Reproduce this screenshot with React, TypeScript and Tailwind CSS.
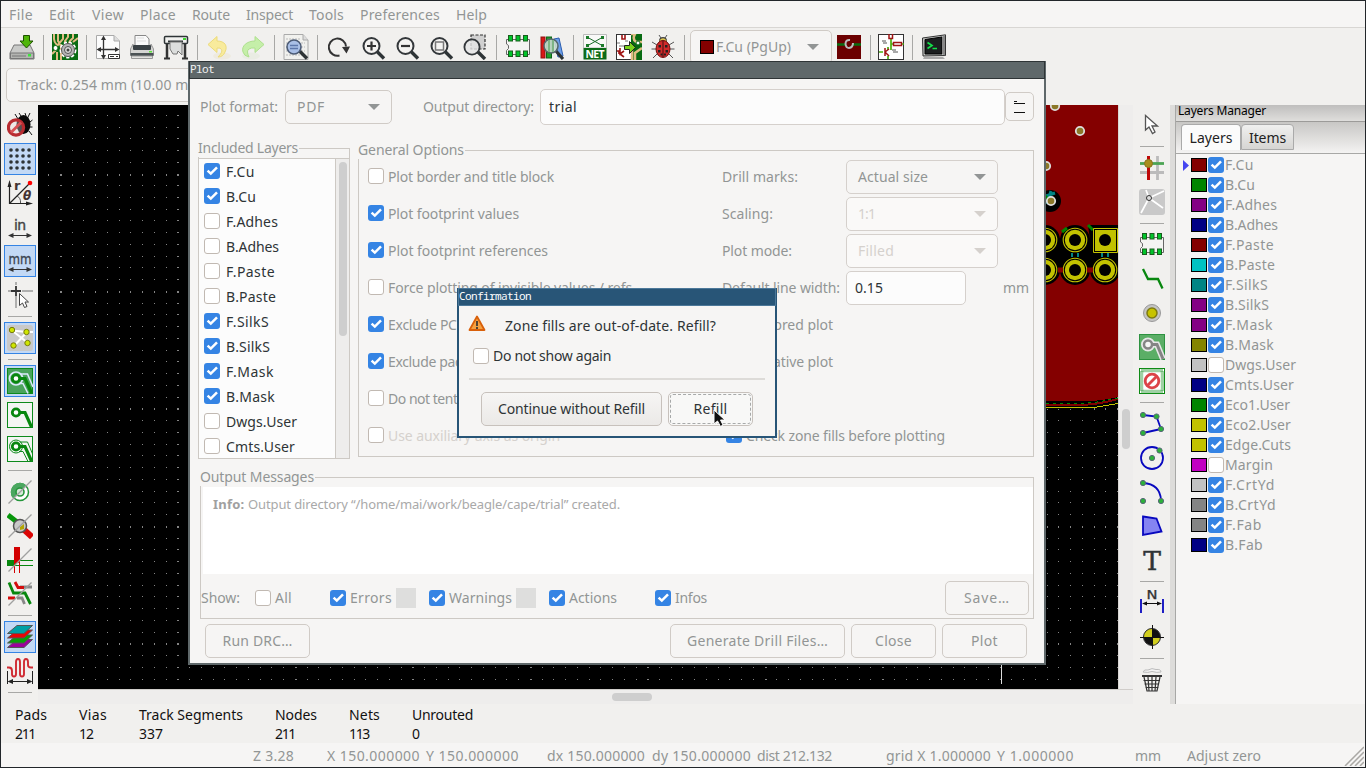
import React, { useLayoutEffect, useRef } from "react";

/* Text label tracked so that it fills exactly `w` pixels. */
function T({ w, children, className = "" }: { w?: number; children: string; className?: string }) {
  const ref = useRef<HTMLSpanElement>(null);
  useLayoutEffect(() => {
    const el = ref.current;
    if (!el || !w) return;
    el.style.letterSpacing = "0px";
    const natural = el.getBoundingClientRect().width;
    el.style.letterSpacing = (w - natural) / children.length + "px";
  }, [w, children]);
  return (
    <span ref={ref} className={"inline-block shrink-0 whitespace-pre " + className}>
      {children}
    </span>
  );
}

function Check({ on }: { on?: boolean }) {
  return on ? (
    <svg className="size-4 shrink-0" viewBox="0 0 16 16">
      <rect width="16" height="16" rx="3" fill="#3584e4" />
      <path d="M3.6 7.6L6.8 10.6L13 4.4" fill="none" stroke="#fff" strokeWidth="2.5" />
    </svg>
  ) : (
    <span className="size-4 shrink-0 rounded-[3px] border border-[#c1b9b2] bg-white" />
  );
}

function Svg({ children, className = "" }: { children: React.ReactNode; className?: string }) {
  return (
    <svg className={"size-[26px] shrink-0 " + className} viewBox="0 0 26 26" fill="none">
      {children}
    </svg>
  );
}

const Handle = () => <path d="M16.5 17L24 24.5" stroke="#2e3436" strokeWidth="3.4" strokeLinecap="butt" />;
const Lens = ({ children }: { children?: React.ReactNode }) => (
  <Svg>
    <Handle />
    <circle cx="11.5" cy="12" r="8" fill="#f6f5f4" fillOpacity=".6" stroke="#33373a" strokeWidth="2" />
    {children}
  </Svg>
);

const Chip = () => (
  <Svg>
    <path d="M1.500 5.500H24.500V20.500H1.500V16.500L3.500 14.500V11.500L1.500 10Z" fill="#f4f4f2" stroke="#666" />
    {[3.5, 11, 18.5].map((x) => (
      <g key={x} fill="#00c52a" stroke="#185c1c">
        <rect x={x} y="1.500" width="4" height="5.500" />
        <rect x={x} y="17" width="4" height="5.500" />
      </g>
    ))}
  </Svg>
);

const top: Record<string, React.ReactNode> = {
  save: (
    <Svg>
      <path d="M5 11H21L25 19V25H1V19Z" fill="#c9cac8" stroke="#777" />
      <path d="M1.5 19H24.5V24.5H1.5Z" fill="#b3b4b1" stroke="#777" />
      <path d="M3 22H17" stroke="#777" />
      <rect x="19" y="20" width="3" height="2.5" fill="#3de63d" />
      <path d="M14.5 1.5H20.5V7H24L17.5 14L11 7H14.5Z" fill="#4fb508" stroke="#1f5200" />
    </Svg>
  ),
  board: (
    <Svg>
      <rect width="26" height="26" fill="#086b12" />
      <path d="M2 0V5Q2 8 5 11V13M6 0V7Q9 10 9 13V26M11 0V5L5 12M16 0V3L13 7V10M21 0V4Q17 7 17 10M26 4L21 8M0 20L4 16M5 18V26" stroke="#e0bd84" strokeWidth="2" />
      <circle cx="3.5" cy="14" r="2.5" fill="#fff" stroke="#086b12" />
      <circle cx="16" cy="16" r="7" fill="#c0c0c0" stroke="#fff" strokeWidth="3" strokeDasharray="3 1.8" />
      <circle cx="16" cy="16" r="6.5" fill="#b5b5b5" stroke="#555" />
      <circle cx="16" cy="16" r="3.5" fill="#ddd" stroke="#555" />
      <circle cx="16" cy="16" r="1.5" fill="#444" />
    </Svg>
  ),
  page: (
    <Svg>
      <path d="M1.5 1.5H19L24.5 7V24.5H1.5Z" fill="#fcfcfc" stroke="#aaa" />
      <path d="M19 1.5V7H24.5" fill="#ddd" stroke="#aaa" />
      <path d="M8.5 4V23M3 15.5H22" stroke="#333" strokeWidth="1.3" />
      <path d="M8.5 1.5L11 6H6ZM8.5 25.5L11 21H6ZM1.5 15.5L6 13V18ZM24.5 15.5L20 13V18Z" fill="#333" />
      <path d="M13.500 20.500H24.500V24.500H13.500Z" fill="#fff" stroke="#333" />
      <path d="M15 22.500H19M21 22.500H23" stroke="#333" />
    </Svg>
  ),
  print: (
    <Svg>
      <path d="M6 1.500H17L20 5V14H6Z" fill="#fafafa" stroke="#888" />
      <path d="M8 4H15M8 7H17" stroke="#ddd" />
      <path d="M4 10L1.500 15V21H24.500V15L22 10V13H4Z" fill="#d5d5d3" stroke="#999" />
      <rect x="4" y="11" width="18" height="5" rx="1" fill="#3a4145" />
      <path d="M1.500 19H24.500V22H1.500Z" fill="#4b5255" />
      <path d="M2.500 22H23.500V24.500H2.500Z" fill="#e2e2e0" stroke="#999" />
      <rect x="20" y="17" width="3" height="1.500" fill="#5be33b" />
    </Svg>
  ),
  plot: (
    <Svg>
      <path d="M4 8V24M22 8V24" stroke="#333" strokeWidth="2.500" />
      <path d="M1 24.500H7M19 24.500H25" stroke="#333" strokeWidth="2" />
      <rect x="1.500" y="2.500" width="23" height="7" rx="1" fill="#f1f1ef" stroke="#2e3436" strokeWidth="1.500" />
      <path d="M5 7.500H20" stroke="#2e3436" strokeWidth="2" />
      <path d="M7 8H19V21L15 17L14 20H10L7 15Z" fill="#dcdedd" stroke="#777" />
      <rect x="20" y="4" width="3" height="2" fill="#3fd72f" />
    </Svg>
  ),
  undo: (
    <Svg>
      <ellipse cx="16" cy="22" rx="9" ry="3.500" fill="#eeeadf" />
      <path d="M2 10.500L11 2.500V7C19 7 22 12 19 18Q17 23 12 23Q17 18 15.500 15.500Q14.500 13.500 11 14V18.500Z" fill="#f8eb9c" stroke="#eddb7a" />
    </Svg>
  ),
  redo: (
    <Svg>
      <ellipse cx="11" cy="22" rx="9" ry="3.500" fill="#e9ece3" />
      <path d="M24 10.500L15 2.500V7C7 7 1 12 3 18Q4 22 9 23Q6 17 9 15Q11 13.500 15 14V18.500Z" fill="#c5efa9" stroke="#aee08e" />
    </Svg>
  ),
  find: (
    <Svg>
      <path d="M1 .5H20L25 6V25.500H1Z" fill="#f1f1ee" stroke="#aaa" />
      <path d="M20 .5V6H25" fill="#ddd" stroke="#aaa" />
      <path d="M3 5H18M3 9H22M3 13H22M3 17H22M3 21H20" stroke="#bbb" strokeDasharray="2 1" />
      <Handle />
      <circle cx="11" cy="13" r="7" fill="#a9bfe6" stroke="#4c5b75" strokeWidth="1.600" />
      <path d="M7 11.500H15M7 14.500H15" stroke="#5d77ab" strokeWidth="1.500" />
    </Svg>
  ),
  refresh: (
    <Svg>
      <path d="M13.500 21.500A8.600 8.600 0 1 1 20 12.500" stroke="#333" strokeWidth="2" />
      <path d="M16 13L24 12.500L20.500 19.500Z" fill="#333" />
    </Svg>
  ),
  zin: <Lens><path d="M7 12H16M11.500 7.500V16.500" stroke="#333" strokeWidth="2.200" /></Lens>,
  zout: <Lens><path d="M7 12H16" stroke="#333" strokeWidth="2.200" /></Lens>,
  zfit: <Lens><rect x="7.500" y="8" width="8" height="8" stroke="#777" strokeWidth="1.500" /></Lens>,
  zsel: (
    <Svg>
      <rect x="9" y="1" width="14" height="14" fill="#d0d0d0" stroke="#333" strokeWidth="1.200" strokeDasharray="3 1.500" />
      <path d="M16 18L23 25" stroke="#2e3436" strokeWidth="3.400" />
      <circle cx="10" cy="13" r="7.600" fill="#e5e5e5" fillOpacity=".8" stroke="#33373a" strokeWidth="1.800" />
    </Svg>
  ),
  chip: <Chip />,
  lib: (
    <Svg>
      <rect x="2" y="3" width="4" height="21" fill="#d71717" stroke="#901010" />
      <rect x="7.500" y="3" width="5" height="21" fill="#1f9d2c" stroke="#0d6218" />
      <path d="M15 5L20 4L24 22L19 23Z" fill="#6d9fea" stroke="#2a5db0" />
      <path d="M17 17L24 25" stroke="#2e3436" strokeWidth="3.200" />
      <circle cx="12" cy="12" r="7" fill="#c9dccf" fillOpacity=".9" stroke="#54676a" strokeWidth="1.500" />
      <path d="M10 6V18M14 6V18" stroke="#7db485" strokeWidth="2" />
    </Svg>
  ),
  net: (
    <Svg>
      <path d="M1.500 .5H24.500V14H1.500Z" fill="#f9f9f8" stroke="#bbb" />
      <path d="M5 3L21 12M21 3L5 12" stroke="#1b6c2a" />
      <path d="M4 2H7V5H4ZM19 2H22V5H19ZM4 10H7V13H4ZM19 10H22V13H19Z" fill="#1b7a2a" />
      <rect x="1.500" y="14" width="23" height="11.500" fill="#0c6b18" />
      <text x="13" y="24" textAnchor="middle" textLength="19" fontFamily="Noto Sans, sans-serif" fontWeight="700" fontSize="10.500" fill="#fff">NET</text>
    </Svg>
  ),
  update: (
    <Svg>
      <rect x=".5" y=".5" width="25" height="25" fill="#fff" stroke="#333" />
      <rect x="15" y="0" width="11" height="26" fill="#086b12" />
      <path d="M15 0H19Q16 5 20 8H26M15 15H16V26M26 14L19 19V26" stroke="#e0bd84" strokeWidth="2.500" />
      <path d="M6 1V5H9V1M3 17V20M1 17H4M4 14V20L8 17M4 20L8 23" stroke="#a01414" strokeWidth="1.600" />
      <path d="M1 9H4M3 12H8M9 7H12" stroke="#777" />
      <circle cx="22" cy="9" r="2" fill="#fff" stroke="#086b12" />
      <path d="M8.500 11.500H13.500V7.500L19.500 13.500L13.500 19.500V15.500H8.500Z" fill="#7bd31c" stroke="#222" />
    </Svg>
  ),
  bug: (
    <Svg>
      <path d="M7 11L2 8M7 15H1.500M8 19L3 24M19 11L24 8M19 15H24.500M18 19L23 24M11 4L9 1M15 4L17 1" stroke="#555" />
      <circle cx="13" cy="7" r="4" fill="#444" />
      <path d="M10 7Q13 3 16 7" stroke="#e0c84b" strokeWidth="1.500" />
      <ellipse cx="13" cy="15" rx="7" ry="8.500" fill="#d22a2a" stroke="#701010" />
      <path d="M13 7V23" stroke="#401010" />
      <path d="M8.500 11h2.500v2.500h-2.500zM15 11h2.500v2.500H15zM8 16h2.500v2.500H8zM15.500 16h2.500v2.500h-2.500zM10.500 19.500h2v2h-2zM14 19.500h2v2h-2z" fill="#222" />
    </Svg>
  ),
  layerPair: (
    <Svg>
      <rect x="1" y="1" width="24" height="24" fill="#6b0000" />
      <path d="M1 10.500H9M17 10.500H25" stroke="#0a6e12" strokeWidth="2.500" />
      <path d="M14 6Q9.500 5.500 9.500 10Q10 14 13 14Q17 13.500 17 9" stroke="#bbb" strokeWidth="2" />
    </Svg>
  ),
  sch: (
    <Svg>
      <rect x=".5" y=".5" width="25" height="25" fill="#fff" stroke="#333" />
      <path d="M13 4V10H16M13 10V16M1 18H5M10 22V25M10 13V16M24 10H26" stroke="#4bb010" strokeWidth="1.700" />
      <path d="M11 0V4.500H14.500V0M15.500 8.500H23.500V11.500H15.500ZM7 14V22M7 18L11 15M7 18L11 22" stroke="#a01414" strokeWidth="1.500" />
      <path d="M4 7H8M5 9H9M14 16H18M15 18H20" stroke="#555" />
    </Svg>
  ),
  term: (
    <Svg>
      <path d="M3 23H22L24 25H2Z" fill="#aaa" />
      <path d="M1.500 4L24.500 .8V21.500L2 22Z" fill="#c5c8c6" stroke="#333" />
      <path d="M4 5.500L21 3V20L4 20Z" fill="#1c1f20" stroke="#000" />
      <path d="M21 3L24 1V21.500L21 20" fill="#888" />
      <path d="M6.500 8.500L11 11.500L6.500 14.500M11.500 14.500H16" stroke="#14e04a" strokeWidth="1.700" />
    </Svg>
  ),
};

const HArrow = ({ color = "#333" }) => (
  <>
    <path d="M3 21.500H23" stroke={color} />
    <path d="M1 21.500L6.500 19V24ZM25 21.500L19.500 19V24Z" fill={color} />
  </>
);

function Trace({ mode }: { mode: number }) {
  return (
    <Svg>
      <rect x=".5" y=".5" width="25" height="25" fill={mode === 0 ? "#4aa35c" : "#f4f5f3"} stroke="#0d8a1c" />
      {mode !== 1 && (
        <>
          <circle cx="9" cy="10.500" r="6.500" stroke={mode === 0 ? "#dbe9fb" : "#0d8a1c"} strokeWidth={mode === 0 ? 1.700 : 1} />
          <path d="M13 6H20.500L26 19M12 15.500H16L21 25.500" stroke={mode === 0 ? "#dbe9fb" : "#0d8a1c"} strokeWidth={mode === 0 ? 1.500 : 1} />
        </>
      )}
      <path d="M12 10.500H18L24.500 25" stroke="#08870f" strokeWidth="3.200" />
      <circle cx="9" cy="10.500" r="3.700" fill="#fff" stroke="#08870f" strokeWidth="2.800" />
    </Svg>
  );
}

const Slash = () => <path d="M1.500 24.500L24.500 1.500" stroke="#a0a0a0" strokeWidth="1.300" />;

const left: (null | { on?: boolean; icon: React.ReactNode })[] = [
  {
    icon: (
      <Svg>
        <path d="M11 7L8 2M20 7L23 1M23 10L25.500 8M23 15H25.500M22 19L25 23M14 4L12 1M19 4L18 1" stroke="#111" />
        <ellipse cx="16.500" cy="12.500" rx="7" ry="9.500" fill="#080808" />
        <circle cx="9" cy="15.500" r="7.600" fill="#e8dada" fillOpacity=".35" stroke="#b82c31" strokeWidth="3.200" />
        <path d="M4 20.500L14 10.500" stroke="#d85155" strokeWidth="2.800" />
      </Svg>
    ),
  },
  {
    on: true,
    icon: (
      <Svg>
        {[4, 10, 16, 22].map((x) => [4, 10, 16, 22].map((y) => <circle key={x + "-" + y} cx={x} cy={y} r="1.800" fill="#2e3436" />))}
      </Svg>
    ),
  },
  {
    icon: (
      <Svg>
        <path d="M2.500 6V23.500H22M3 23L22 4" stroke="#222" strokeWidth="1.200" />
        <path d="M2.500 0L4.500 7H.5ZM26 23.500L19 21.500V25.500Z" fill="#222" />
        <path d="M10 16Q14 18 13.500 23" stroke="#555" />
        <circle cx="23" cy="3" r="2.300" fill="red" />
        <text x="7" y="10" fontFamily="DejaVu Sans, sans-serif" fontWeight="700" fontSize="13" fill="#433">r</text>
        <text x="16" y="19.500" fontFamily="DejaVu Sans, sans-serif" fontWeight="700" fontStyle="italic" fontSize="12" fill="#433">θ</text>
      </Svg>
    ),
  },
  {
    icon: (
      <Svg>
        <text x="13" y="16" textAnchor="middle" textLength="12" fontFamily="DejaVu Sans, sans-serif" fontSize="14" fill="#444" stroke="#444" strokeWidth=".4">in</text>
        <HArrow />
      </Svg>
    ),
  },
  {
    on: true,
    icon: (
      <Svg>
        <text x="13" y="16" textAnchor="middle" textLength="23" lengthAdjust="spacingAndGlyphs" fontFamily="DejaVu Sans, sans-serif" fontSize="14" fill="#3a4450" stroke="#3a4450" strokeWidth=".3">mm</text>
        <HArrow />
      </Svg>
    ),
  },
  {
    icon: (
      <Svg>
        <path d="M9 0V3M9 14V26M1 9H4M15 9H26" stroke="#999" strokeWidth="1.500" />
        <path d="M9 4V14M4 9H14" stroke="#333" strokeWidth="1.800" />
        <path d="M12.500 11.500V23.500L15.500 21L17.500 25.500L20 24.500L18 20H21.500Z" fill="#fff" stroke="#444" />
      </Svg>
    ),
  },
  null,
  {
    on: true,
    icon: (
      <Svg>
        <rect width="26" height="26" rx="3" fill="#c9c9c9" />
        <path d="M5 5.500L21 18M20 7L7 21M5 5.500L20 7H26" stroke="#fff" strokeWidth="2" />
        {[[5, 5], [19.500, 7], [6.500, 20.500], [20.500, 18]].map(([x, y]) => <circle key={x} cx={x} cy={y} r="2.700" fill="#cfe600" stroke="#777a10" />)}
      </Svg>
    ),
  },
  null,
  { on: true, icon: <Trace mode={0} /> },
  { icon: <Trace mode={1} /> },
  { icon: <Trace mode={2} /> },
  null,
  {
    icon: (
      <Svg>
        <circle cx="13" cy="13" r="8.500" fill="#fff" stroke="#24963a" strokeWidth="1.500" />
        <path d="M6.500 19.500A9 9 0 0 1 19.500 6.500Z" fill="#4ba760" />
        <circle cx="13" cy="13" r="4" fill="#d7e8d9" stroke="#24963a" strokeWidth="1.600" />
        <Slash />
      </Svg>
    ),
  },
  {
    icon: (
      <Svg>
        <path d="M1 2L10 9" stroke="#06960b" strokeWidth="5" />
        <path d="M13 13L25 24" stroke="#db0606" strokeWidth="6" />
        <circle cx="13" cy="13" r="6.500" fill="#c9c9c9" stroke="#555" strokeWidth="1.500" />
        <path d="M13 14L17 11V16L13 17Z" fill="#b5a600" />
        <Slash />
      </Svg>
    ),
  },
  {
    icon: (
      <Svg>
        <rect y="13" width="9" height="6" fill="#08870f" />
        <path d="M9 13.500H26M9 18.500H26" stroke="#08870f" />
        <rect x="7" width="6" height="16" fill="#d30000" />
        <path d="M7.500 16V26M12.500 16V26" stroke="#d30000" />
        <Slash />
      </Svg>
    ),
  },
  {
    icon: (
      <Svg>
        <path d="M13 6H25M10 17H15L17.500 23" stroke="#888" strokeWidth="2.800" />
        <path d="M8 1L11 6.500H17M1 17H8" stroke="#d30c0c" strokeWidth="2.800" />
        <path d="M2 1.500L6.500 12H18L23.500 23" stroke="#08870f" strokeWidth="2.800" />
        <Slash />
      </Svg>
    ),
  },
  null,
  {
    on: true,
    icon: (
      <Svg>
        {[["#9c009c", 14], ["#08a008", 9.500], ["#e80606", 4.500], ["#00a0a5", 0]].map(([c, y]) => (
          <path key={c} d="M.5 9.500L10 1.500H25.500L17 9.500Z" transform={`translate(0 ${y})`} fill={String(c)} stroke="#555" />
        ))}
      </Svg>
    ),
  },
  {
    icon: (
      <Svg>
        <path d="M0 9.500H2Q5 9.500 5 13V16Q5 18.500 7 18.500T9 16V4Q9 1 11 1T13 4V16Q13 18.500 15 18.500T17 16V4Q17 1 19 1T21 4V7Q21 9.500 24 9.500H26" stroke="#cf2a32" strokeWidth="1.900" />
        <path d="M.5 13V26M25.500 13V26" stroke="#222" />
        <path d="M3 23.500H23" stroke="#222" />
        <path d="M.5 23.500L6 21V26ZM25.500 23.500L20 21V26Z" fill="#222" />
      </Svg>
    ),
  },
  null,
];

const Node = ({ p }: { p: number[][] }) => (
  <>{p.map(([x, y]) => <circle key={x + "," + y} cx={x} cy={y} r="2.600" fill="#2bb13a" stroke="#567" />)}</>
);

const right: (null | React.ReactNode)[] = [
  <Svg><path d="M6.500 3.500V18L10 15L13.500 21.500L16 20L13 14H18.500Z" fill="#fff" stroke="#555" strokeWidth="1.300" /></Svg>,
  null,
  <Svg>
    <path d="M18.500 1V25M1 17.500H25" stroke="#bbb" strokeWidth="2.800" />
    <path d="M9.500 8.500H25" stroke="#4ca454" strokeWidth="2.800" />
    <path d="M9.500 1V25" stroke="#bf0808" strokeWidth="3" />
    <path d="M1 8.500H7" stroke="#4ca454" strokeWidth="2.800" />
    <circle cx="9.500" cy="8.500" r="4" fill="#a98d1c" stroke="#897420" />
  </Svg>,
  <Svg>
    <rect width="26" height="26" rx="3" fill="#c9c9c9" />
    <path d="M10 9L7 1M10 9L2 24M10 9L24 19M10 9L25 2" stroke="#fff" strokeWidth="1.700" />
    <circle cx="10" cy="9" r="2.500" fill="#ddd" stroke="#333" />
  </Svg>,
  null,
  <Chip />,
  <Svg><path d="M4 3L9 13H19L23.500 22.500" stroke="#08870f" strokeWidth="2.300" /></Svg>,
  <Svg>
    <circle cx="13" cy="13" r="8.500" fill="#c4c4c4" stroke="#999" />
    <circle cx="13" cy="13" r="5" fill="#c7c300" stroke="#7d7a12" strokeWidth="1.500" />
  </Svg>,
  <Svg>
    <rect x=".5" y=".5" width="25" height="25" fill="#5bae66" stroke="#2d9240" />
    <circle cx="9" cy="10.500" r="5.500" stroke="#e7e7e7" strokeWidth="3" />
    <path d="M11 10.500H18L24 25" stroke="#e7e7e7" strokeWidth="6" />
    <path d="M11 10.500H18L24 25" stroke="#858585" strokeWidth="3" />
    <circle cx="9" cy="10.500" r="4" fill="#f5f5f5" stroke="#858585" strokeWidth="2.500" />
  </Svg>,
  <Svg>
    <rect x=".5" y=".5" width="25" height="25" fill="#fff" stroke="#08870f" />
    <rect x="2.500" y="2.500" width="21" height="21" stroke="#40a34a" strokeWidth="3.500" strokeDasharray="1 1" />
    <circle cx="13" cy="13" r="6.800" fill="#fff" stroke="#dc4448" strokeWidth="2.800" />
    <path d="M8.500 17.500L17.500 8.500" stroke="#dc4448" strokeWidth="2.800" />
  </Svg>,
  null,
  <Svg><path d="M4 4L17.500 5.500L22 18L4 22" stroke="#0808bf" strokeWidth="1.800" /><Node p={[[4, 4], [17.500, 5.500], [22, 18], [4, 22]]} /></Svg>,
  <Svg><circle cx="13" cy="13" r="11" stroke="#0808bf" strokeWidth="1.800" /><Node p={[[13, 13], [20.500, 5.500]]} /></Svg>,
  <Svg><path d="M4 4Q21 5 22 21" stroke="#0808bf" strokeWidth="1.800" /><Node p={[[4, 4], [4, 22], [22, 22]]} /></Svg>,
  <Svg><path d="M4 3.500L17.500 5.500L22.500 18.500L4 22Z" fill="#8584f2" stroke="#0808bf" strokeWidth="1.800" /></Svg>,
  <Svg><text x="13" y="22.700" textAnchor="middle" fontFamily="DejaVu Serif, serif" fontSize="26.500" fill="#2e3436" stroke="#2e3436" strokeWidth=".5">T</text></Svg>,
  null,
  <Svg>
    <text x="13" y="9" textAnchor="middle" textLength="11" lengthAdjust="spacingAndGlyphs" fontFamily="DejaVu Sans, sans-serif" fontSize="12" fill="#333" stroke="#333" strokeWidth=".3">N</text>
    <path d="M2 9V23M24 9V23" stroke="#0808bf" strokeWidth="1.800" />
    <path d="M5 13.500H21" stroke="#111" />
    <path d="M3 13.500L8 11.500V15.500ZM23 13.500L18 11.500V15.500Z" fill="#111" />
  </Svg>,
  <Svg>
    <circle cx="13" cy="13" r="8.500" fill="#111" stroke="#333" />
    <path d="M13 13V5A8 8 0 0 0 5 13ZM13 13V21A8 8 0 0 0 21 13Z" fill="#d1ce1e" />
    <path d="M13.500 1V25M1 13.500H25" stroke="#111" />
  </Svg>,
  null,
  <Svg>
    <path d="M4 5Q5 2 9 3Q13 .5 17 2.500Q22 2 22 5Q18 6 13 4.500Q9 6 4 5" fill="#f4f4f4" stroke="#bbb" />
    <path d="M3 8H23V10H3Z" fill="#333" />
    <path d="M5 10L8 24H18L21 10M4.500 13.500H21M5.500 17H20M6.500 20.500H19.500M9 10L10 24M13 10V24M17 10L16 24" stroke="#333" strokeWidth="1.200" />
  </Svg>,
];

const menu: [string, number, number][] = [
  ["File", 24, 16], ["Edit", 26, 17], ["View", 32, 16], ["Place", 36, 16], ["Route", 38, 16],
  ["Inspect", 47, 16], ["Tools", 35, 16], ["Preferences", 80, 16], ["Help", 31, 0],
];

const layers: [string, string, boolean, number][] = [
  ["F.Cu", "#840000", true, 29], ["B.Cu", "#008400", true, 30], ["F.Adhes", "#840084", true, 52],
  ["B.Adhes", "#000084", true, 53], ["F.Paste", "#840000", true, 49], ["B.Paste", "#00c2c2", true, 50],
  ["F.SilkS", "#008484", true, 43], ["B.SilkS", "#840084", true, 44], ["F.Mask", "#840084", true, 48],
  ["B.Mask", "#848400", true, 49], ["Dwgs.User", "#c2c2c2", false, 71], ["Cmts.User", "#000084", true, 69],
  ["Eco1.User", "#008400", true, 65], ["Eco2.User", "#c2c200", true, 66], ["Edge.Cuts", "#c2c200", true, 66],
  ["Margin", "#c200c2", false, 48], ["F.CrtYd", "#c2c2c2", true, 50], ["B.CrtYd", "#848484", true, 51],
  ["F.Fab", "#848484", true, 37], ["B.Fab", "#000084", true, 38],
];

const plotLayers: [number, boolean][] = [
  [0, true], [1, true], [2, false], [3, false], [4, false], [5, false], [6, true], [7, true], [8, true], [9, true], [10, false], [11, false],
];

function TopSep() {
  return <span className="mx-1 h-[25px] w-px shrink-0 bg-[#a8a8a6]" />;
}

function Caret({ className }: { className: string }) {
  return (
    <svg className={"h-[6px] w-3 shrink-0 " + className} viewBox="0 0 12 6">
      <path d="M0 0H12L6 6Z" fill="currentColor" />
    </svg>
  );
}

function Canvas() {
  const dots: React.ReactNode[] = [];
  for (let i = -1; i < 93; i++) {
    for (let j = -5; j < 44; j++) {
      const x = Math.round(60 + i * 11.745) - 38;
      const y = Math.round(173.500 + j * 11.745) - 105;
      const mx = i % 10 === 0;
      const my = j % 10 === 0;
      if (x > 150 && x < 1006 && y < 558) continue;
      dots.push(<rect key={i + "_" + j} x={x} y={y} width={mx ? 2 : 1} height={my ? 2 : 1} fill="#848484" />);
    }
  }
  const pad = (x: number, y: number) => (
    <g key={x + "p" + y}>
      <circle cx={x} cy={y} r="15" fill="#000" />
      <circle cx={x} cy={y} r="11.800" fill="#000" stroke="#c2c200" strokeWidth="1.100" />
      <circle cx={x} cy={y} r="10.200" fill="#c2c200" />
      <circle cx={x} cy={y} r="6" fill="#000" />
    </g>
  );
  return (
    <svg className="block h-[584px] w-[1080px]" viewBox="0 0 1080 584" shapeRendering="crispEdges">
      <rect width="1080" height="584" fill="#000" />
      {dots}
      <path d="M1008 0H1080V292Q1062 296 1050 296H1008Z" fill="#840000" />
      <path d="M1008 299.500H1050Q1062 299 1080 294" fill="none" stroke="#840000" strokeWidth="2" />
      <path d="M1008 298H1050Q1062 297 1080 293" fill="none" stroke="#008400" strokeDasharray="3 4" />
      <path d="M1008 302.500H1056L1080 298" fill="none" stroke="#000" strokeWidth="2" />
      <path d="M1008 302.500H1056L1080 298.500" fill="none" stroke="#c2c200" />
      <g shapeRendering="auto">
        {[[1017, 1], [1042, 26], [1008, 61]].map(([x, y]) => (
          <circle key={x} cx={x} cy={y} r="4.200" fill="#8b7828" stroke="#ddd" strokeWidth="1.800" />
        ))}
        <circle cx="1012" cy="96" r="11" fill="#000" />
        <path d="M1005 92L1017 88M1009 99L1013 86" stroke="#008484" strokeWidth="3" />
        <path d="M1006 90L1010 94" stroke="#008400" strokeWidth="3" />
        <circle cx="1013" cy="96" r="4.200" fill="#8b7828" stroke="#ddd" strokeWidth="1.800" />
        <rect x="1008" y="133" width="72" height="34" fill="#000" />
        {[1007, 1037].map((x) => pad(x, 135))}
        {[1007, 1037, 1067].map((x) => pad(x, 165))}
        <path d="M1050 120H1080V151H1054Z" fill="#000" />
        <path d="M1050 120L1055 125M1024 127L1029 123" stroke="#008400" strokeWidth="3" />
        <path d="M1055.500 123.500H1079.500V147.500H1055.500Z" fill="#000" stroke="#c2c200" />
        <path d="M1057 125H1078V146H1057Z" fill="#c2c200" />
        <circle cx="1067" cy="135" r="6" fill="#000" />
        <path d="M1020 165H1025M1049 165H1055" stroke="#840000" strokeWidth="5" />
        <path d="M1034 148V152M1040 148V152M1064 148V152M1070 148V152" stroke="#008484" strokeWidth="2" />
      </g>
      <path d="M963.500 558V579" stroke="#ddd" />
    </svg>
  );
}

function Group({ title, tw, className, children }: { title: string; tw: number; className: string; children: React.ReactNode }) {
  return (
    <div className={"shrink-0 border border-[#cdc9c4] " + className}>
      <div className="-mt-[10px] -ml-px flex h-[18px] items-center leading-none">
        <span className="bg-[#f6f5f4] pr-px leading-[18px]"><T w={tw}>{title}</T></span>
      </div>
      {children}
    </div>
  );
}

const Btn = ({ className, children, w }: { className: string; children: string; w: number }) => (
  <div className={"flex h-[34px] shrink-0 items-center justify-center rounded-[5px] border " + className}>
    <T w={w}>{children}</T>
  </div>
);

function PlotDialog() {
  const opts: [string, number, boolean][] = [
    ["Plot border and title block", 166, false],
    ["Plot footprint values", 131, true],
    ["Plot footprint references", 160, true],
    ["Force plotting of invisible values / refs", 244, false],
    ["Exclude PCB edge layer from other layers", 260, true],
    ["Exclude pads from silkscreen", 180, true],
    ["Do not tent vias", 96, false],
    ["Use auxiliary axis as origin", 172, false],
  ];
  return (
    <div className="absolute top-[61px] left-[188px] flex h-[604px] w-[858px] flex-col border-x-2 border-b-2 border-[#5f686a] bg-[#f6f5f4] text-[#929595]">
      <div className="-mx-px flex h-[18px] shrink-0 items-start border border-[#2e3436] bg-[#5f686a] text-[#f3f3f3]">
        <T w={24} className="-mt-px font-['Noto_Sans_Mono','DejaVu_Sans_Mono',monospace] text-[11px] leading-4">Plot</T>
      </div>
      <div className="flex h-14 shrink-0 items-center pl-[10px]">
        <T w={78}>Plot format:</T>
        <div className="ml-[7px] flex h-[34px] w-[107px] items-center justify-between rounded-[5px] border border-[#d0cbc6] pr-[11px] pl-[11px]">
          <T w={28}>PDF</T><Caret className="text-[#929595]" />
        </div>
        <T w={111} className="ml-[31px]">Output directory:</T>
        <div className="ml-[6px] flex h-9 w-[465px] items-center rounded-[5px] border border-[#d5d0cc] bg-[#fcfcfc] pl-2 text-[#2e3436]">
          <T w={28}>trial</T>
        </div>
        <div className="mb-px flex size-[29px] items-center justify-center rounded-[5px] border border-[#d0cbc6]">
          <svg className="h-3 w-[11px]" viewBox="0 0 11 12"><path d="M0 .5H3M0 2.500H11M0 11.500H11" stroke="#111" fill="none" /></svg>
        </div>
      </div>
      <div className="flex h-[322px] shrink-0 items-start">
        <Group title="Included Layers" tw={100} className="mt-[13px] ml-2 h-[311px] w-[152px]">
          <div className="mt-px flex h-[300px] overflow-hidden border-t border-[#cdc9c4] text-[#2e3436]">
            <div className="w-[136px] bg-[#fcfcfc]">
              {plotLayers.map(([i, on]) => (
                <div key={i} className="flex h-[25px] items-center pl-[5px]">
                  <span className="-mt-px flex"><Check on={on} /></span>
                  <T w={layers[i][3]} className="ml-[6px]">{layers[i][0]}</T>
                </div>
              ))}
            </div>
            <div className="flex w-[14px] justify-center border-l border-[#cdc9c4] bg-[#eeedec] pt-[3px]">
              <div className="h-[174px] w-2 rounded-full bg-[#cecece]" />
            </div>
          </div>
        </Group>
        <Group title="General Options" tw={106} className="mt-[15px] ml-2 h-[307px] w-[676px]">
          <div className="-mt-px flex h-[296px]">
            <div className="w-[363px] pl-[9px]">
              {opts.map(([t, w, on], i) => (
                <div key={t} className={"flex h-[37px] items-center " + (i === 7 ? "text-[#d5d1cd]" : "")}>
                  <span className="-mt-px flex"><Check on={on} /></span><T w={w} className="ml-1">{t}</T>
                </div>
              ))}
            </div>
            <div className="flex-1">
              {([["Drill marks:", 76, "Actual size", 70, true], ["Scaling:", 51, "1:1", 17, false], ["Plot mode:", 70, "Filled", 36, false]] as [string, number, string, number, boolean][]).map(([l, lw, v, vw, on]) => (
                <div key={l} className="flex h-[37px] items-center">
                  <span className="w-[124px]"><T w={lw}>{l}</T></span>
                  <div className={"flex h-[34px] w-[152px] items-center justify-between rounded-[5px] border border-[#d5d0cc] px-[11px] " + (on ? "" : "bg-[#faf9f8] text-[#d5d1cd]")}>
                    <T w={vw}>{v}</T><Caret className={on ? "text-[#929595]" : "text-[#d5d1cd]"} />
                  </div>
                </div>
              ))}
              <div className="flex h-[37px] items-center">
                <span className="w-[124px]"><T w={118}>Default line width:</T></span>
                <div className="flex h-[34px] w-[120px] items-center rounded-[5px] border border-[#d5d0cc] bg-[#fcfcfc] pl-2 text-[#2e3436]"><T w={28}>0.15</T></div>
                <T w={26} className="ml-[37px]">mm</T>
              </div>
              {([["Mirrored plot", 87], ["Negative plot", 87]] as [string, number][]).map(([t, w]) => (
                <div key={t} className="flex h-[37px] items-center pl-1"><Check /><T w={w} className="ml-1">{t}</T></div>
              ))}
              <div className="h-[37px]" />
              <div className="flex h-[37px] items-center pl-1"><span className="-mt-px flex"><Check on /></span><T w={199} className="ml-1">Check zone fills before plotting</T></div>
            </div>
          </div>
        </Group>
      </div>
      <Group title="Output Messages" tw={114} className="mt-5 ml-[10px] h-[142px] w-[834px]">
        <div className="mt-px mb-px ml-0.5 h-[87px] bg-white pt-[8px] pl-[10px] text-[13px] leading-[18px] text-[#a9a9a9]">
          <T w={35} className="font-bold text-[#a0a0a0]">Info: </T>
          <T w={372}>Output directory “/home/mai/work/beagle/cape/trial” created.</T>
        </div>
        <div className="flex h-[46px] items-center">
          <T w={39}>Show:</T>
          <span className="ml-[15px] flex items-center gap-1"><Check /><T w={17}>All</T></span>
          <span className="ml-[38px] flex items-center gap-1"><Check on /><T w={42}>Errors</T></span>
          <span className="ml-1 size-5 bg-[#dededd]" />
          <span className="ml-[13px] flex items-center gap-1"><Check on /><T w={63}>Warnings</T></span>
          <span className="ml-1 size-5 bg-[#dededd]" />
          <span className="ml-[13px] flex items-center gap-1"><Check on /><T w={48}>Actions</T></span>
          <span className="ml-[38px] flex items-center gap-1"><Check on /><T w={32}>Infos</T></span>
          <Btn w={46} className="mr-1 ml-auto w-[84px] border-[#d0cbc6]">Save…</Btn>
        </div>
      </Group>
      <div className="flex h-[44px] items-center pr-[17px] pl-[15px]">
        <Btn w={70} className="mr-auto w-[105px] border-[#d0cbc6]">Run DRC…</Btn>
        <Btn w={141} className="mr-[6px] w-[175px] border-[#d0cbc6]">Generate Drill Files…</Btn>
        <Btn w={37} className="mr-[6px] w-[85px] border-[#d0cbc6]">Close</Btn>
        <Btn w={27} className="w-[85px] border-[#d0cbc6]">Plot</Btn>
      </div>
    </div>
  );
}

function Confirmation() {
  return (
    <div className="absolute top-[288px] left-[457px] flex h-[150px] w-[320px] flex-col border-x-2 border-b-2 border-[#285577] bg-[#f6f5f4] text-[#2e3436]">
      <div className="-mx-px flex h-[18px] shrink-0 items-start border border-[#4c7899] bg-[#285577] text-white">
        <T w={72} className="-mt-px font-['Noto_Sans_Mono','DejaVu_Sans_Mono',monospace] text-[11px] leading-4">Confirmation</T>
      </div>
      <div className="flex h-[38px] items-center pl-[9px]">
        <svg className="mb-0.5 size-[18px]" viewBox="0 0 18 18">
          <path d="M9 1.500L16.500 15H1.500Z" fill="#f5a142" stroke="#d9600a" strokeWidth="1.800" strokeLinejoin="round" />
          <path d="M9 6V11M9 12V14" stroke="#333" strokeWidth="1.700" />
        </svg>
        <T w={211} className="mt-0.5 ml-[19px]">Zone fills are out-of-date. Refill?</T>
      </div>
      <div className="-mt-px flex h-[26px] items-center pl-[14px]"><Check /><T w={118} className="ml-1">Do not show again</T></div>
      <div className="mx-[10px] mt-[9px] h-0.5 shrink-0 bg-[#dddbd8]" />
      <div className="mt-3 flex gap-[6px] pl-[22px]">
        <Btn w={147} className="w-[181px] border-[#c7c1bc] bg-linear-to-b from-[#f6f5f4] to-[#ebe9e7]">Continue without Refill</Btn>
        <div className="flex h-[34px] w-[85px] rounded-[5px] border border-[#c7c1bc] bg-[#f8f8f7] p-px">
          <div className="flex flex-1 items-center justify-center rounded-[3px] border border-dashed border-[#a7a9a9]"><T w={34}>Refill</T></div>
        </div>
      </div>
      <svg className="absolute top-[121px] left-[254px] h-[19px] w-[14px]" viewBox="0 0 14 19">
        <path d="M1 1V15L4.500 12L7.500 17.500L10 16L7.500 11H12Z" fill="#111" stroke="#fff" />
      </svg>
    </div>
  );
}

export default function App() {
  const stats: [string, string, number, number, number][] = [
    ["Pads", "211", 32, 20, 64], ["Vias", "12", 28, 14, 60], ["Track Segments", "337", 104, 24, 136],
    ["Nodes", "211", 42, 20, 74], ["Nets", "113", 31, 20, 63], ["Unrouted", "0", 61, 9, 80],
  ];
  const topKeys = ["save", "|", "board", "|", "page", "print", "plot", "|", "undo", "redo", "|", "find", "|", "refresh", "zin", "zout", "zfit", "zsel", "|", "chip", "lib", "|", "net", "update", "bug", "|"];
  return (
    <div className="relative flex h-[768px] w-[1366px] flex-col overflow-hidden border border-[#22262a] bg-[#f1f0ee] font-['Noto_Sans',sans-serif] text-[14px] leading-[20px] text-[#929595]">
      <div className="flex h-[27px] shrink-0 items-center border-b border-[#d8d6d3] bg-[#f6f5f4] pt-[2px] pl-2">
        {menu.map(([t, w, g]) => (
          <span key={t} className="flex" style={{ marginRight: g }}><T w={w}>{t}</T></span>
        ))}
      </div>
      <div className="flex h-[38px] shrink-0 items-center pl-1">
        {topKeys.map((k, i) => k === "|" ? <TopSep key={i} /> : <span key={i} className="flex w-[34px] shrink-0 justify-center">{top[k]}</span>)}
        <div className="ml-px flex h-[34px] w-[142px] items-center rounded-[5px] border border-[#d0cbc6] bg-[#f6f5f4] pr-3 pl-[9px]">
          <span className="size-[14px] border border-black bg-[#840000]" />
          <T w={75} className="ml-[2px]">F.Cu (PgUp)</T>
          <Caret className="ml-auto text-[#929595]" />
        </div>
        <span className="flex w-[34px] justify-center">{top.layerPair}</span><TopSep />
        <span className="-ml-px flex w-[34px] justify-center">{top.sch}</span><TopSep />
        <span className="flex w-[34px] justify-center">{top.term}</span>
      </div>
      <div className="h-[39px] shrink-0 pt-[2px] pl-[5px]">
        <div className="flex h-[34px] w-[216px] items-center overflow-hidden rounded-[5px] border border-[#d0cbc6] bg-[#f6f5f4] pl-[11px]">
          <T w={189}>Track: 0.254 mm (10.00 mils)</T>
        </div>
      </div>
      <div className="flex h-[599px] shrink-0">
        <div className="flex w-[37px] shrink-0 flex-col items-center pt-[3px]">
          {left.map((b, i) => b === null ? (
            <span key={i} className="my-1 h-px w-6 shrink-0 bg-[#a8a8a6]" />
          ) : (
            <span key={i} className="flex h-[34px] w-9 shrink-0 items-center justify-center">
              <span className={"flex size-8 items-center justify-center " + (b.on ? "border border-[#3584e4] bg-[#c3d9f5]" : "")}>{b.icon}</span>
            </span>
          ))}
        </div>
        <div className="flex w-[1095px] shrink-0 flex-col">
          <div className="flex h-[584px]">
            <Canvas />
            <div className="flex w-[15px] justify-center border-l border-[#dad7d4] bg-[#eeedec] pt-[304px]">
              <div className="h-10 w-2 rounded-full bg-[#cecece]" />
            </div>
          </div>
          <div className="flex h-[15px] items-center border-t border-[#d0cdca] bg-[#eeedec] pl-[574px]">
            <div className="h-2 w-10 rounded-full bg-[#cecece]" />
          </div>
        </div>
        <div className="flex w-[37px] shrink-0 flex-col items-center pt-[3px]">
          {right.map((b, i) => b === null ? (
            <span key={i} className="my-1 h-px w-6 shrink-0 bg-[#a8a8a6]" />
          ) : (
            <span key={i} className="flex h-[34px] shrink-0 items-center">{b}</span>
          ))}
        </div>
        <div className="w-[5px] shrink-0 bg-[#dddcda]" />
        <div className="flex flex-1 flex-col border-l border-[#a8a8a6] bg-[#f6f5f4]">
          <div className="flex h-[17px] shrink-0 items-start border-b border-[#9c9b99] bg-linear-to-b from-[#bfbebd] to-[#dfdedc] pl-[2px] text-black">
            <T w={88} className="-mt-[2px] text-[12px] leading-[16px]">Layers Manager</T>
          </div>
          <div className="flex h-8 shrink-0 items-end border-b border-[#a8a8a6] bg-linear-to-b from-[#c8c7c5] to-[#f4f3f2] pl-[5px] pb-[3px]">
            <div className="flex h-[26px] w-[60px] items-center justify-center rounded-t border border-b-0 border-[#aaa] bg-[#fbfbfb] text-[#222]"><T w={43}>Layers</T></div>
            <div className="flex h-[26px] w-[53px] items-center justify-center rounded-t border border-[#aaa] bg-linear-to-b from-[#f0f0ef] to-[#d6d5d3] pt-[2px] text-[#222]"><T w={37}>Items</T></div>
          </div>
          <div className="pt-px">
            {layers.map(([t, c, on, w], i) => (
              <div key={t} className="flex h-5 items-center pl-[7px]">
                <svg className="mr-[2px] h-[11px] w-[6px]" viewBox="0 0 6 11">{i === 0 && <path d="M0 0L6 5.500L0 11Z" fill="#4646f0" />}</svg>
                <span className="h-[14px] w-4 border border-black" style={{ backgroundColor: c }} />
                <span className="ml-px flex"><Check on={on} /></span>
                <T w={w} className="ml-px">{t}</T>
              </div>
            ))}
          </div>
        </div>
      </div>
      <div className="flex h-[39px] shrink-0 pt-px pl-[14px] text-[#111]">
        {stats.map(([a, b, aw, bw, cw]) => (
          <div key={a} className="flex flex-col leading-[19px]" style={{ width: cw }}>
            <T w={aw} className="self-start">{a}</T><T w={bw} className="self-start">{b}</T>
          </div>
        ))}
      </div>
      <div className="flex h-[24px] shrink-0 items-center bg-[#f6f5f4] pt-px pl-[252px]">
        <T w={41}>Z 3.28</T>
        <T w={93} className="ml-[33px]">X 150.000000</T>
        <T w={93} className="ml-[6px]">Y 150.000000</T>
        <T w={98} className="ml-[28px]">dx 150.000000</T>
        <T w={99} className="ml-[7px]">dy 150.000000</T>
        <T w={75} className="ml-[6px]">dist 212.132</T>
        <T w={105} className="ml-[54px]">grid X 1.000000</T>
        <T w={77} className="ml-[6px]">Y 1.000000</T>
        <T w={26} className="ml-[61px]">mm</T>
        <T w={74} className="ml-[26px]">Adjust zero</T>
        <svg className="mr-px ml-auto h-5 w-5" viewBox="0 0 20 20"><path d="M1 20L20 1M6 20L20 6M11 20L20 11M16 20L20 16" stroke="#aaa8a5" strokeWidth="1.500" /></svg>
      </div>
      <div className="absolute -top-px -left-px">
        <PlotDialog />
        <Confirmation />
      </div>
    </div>
  );
}
